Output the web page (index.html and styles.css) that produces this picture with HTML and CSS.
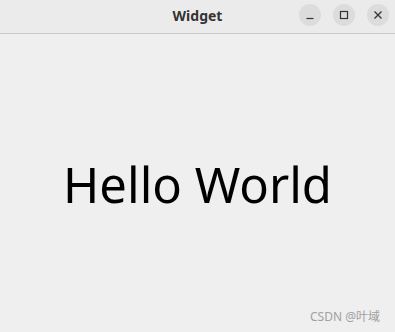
FILE: index.html
```html
<!DOCTYPE html>
<html lang="en">
<head>
    <meta charset="UTF-8">
    <meta name="viewport" content="width=device-width, initial-scale=1.0">
    <title>Widget</title>
    <link rel="stylesheet" href="styles.css">
</head>
<body>
    <div class="window">
        <div class="titlebar">
            <span class="title">Widget</span>
            <div class="controls">
                <button class="ctl"><svg width="10" height="10" viewBox="0 0 10 10"><path d="M1.5 8.5h7" stroke="#333" stroke-width="1.2"/></svg></button>
                <button class="ctl"><svg width="10" height="10" viewBox="0 0 10 10"><rect x="1.5" y="1.5" width="7" height="7" fill="none" stroke="#333" stroke-width="1.2"/></svg></button>
                <button class="ctl"><svg width="10" height="10" viewBox="0 0 10 10"><path d="M1.5 1.5l7 7M8.5 1.5l-7 7" stroke="#333" stroke-width="1.3"/></svg></button>
            </div>
        </div>
        <div class="content">
            <p class="hello">Hello World</p>
            <span class="mark">CSDN @叶域</span>
        </div>
    </div>
</body>
</html>
```

FILE: styles.css
```css
body { margin: 0; font-family: "Noto Sans", "Noto Sans CJK SC", sans-serif; background: #efefef; }
.window { width: 395px; height: 332px; display: flex; flex-direction: column; }
.titlebar { height: 33px; background: #ebebeb; border-bottom: 1px solid #c8c8c8; position: relative; display: flex; align-items: center; justify-content: center; }
.title { font-weight: bold; font-size: 14px; color: #333; margin-top: -3px; }
.controls { position: absolute; right: 6px; top: 4px; display: flex; gap: 12px; }
.ctl { width: 22px; height: 22px; border-radius: 50%; border: none; background: #dcdcdc; padding: 0; display: flex; align-items: center; justify-content: center; }
.content { flex: 1; position: relative; display: flex; align-items: center; justify-content: center; }
.hello { margin: 2px 0 0 0; font-size: 49px; color: #000; }
.mark { position: absolute; right: 15px; bottom: 7px; font-size: 12px; color: #a0a0a0; }
```
